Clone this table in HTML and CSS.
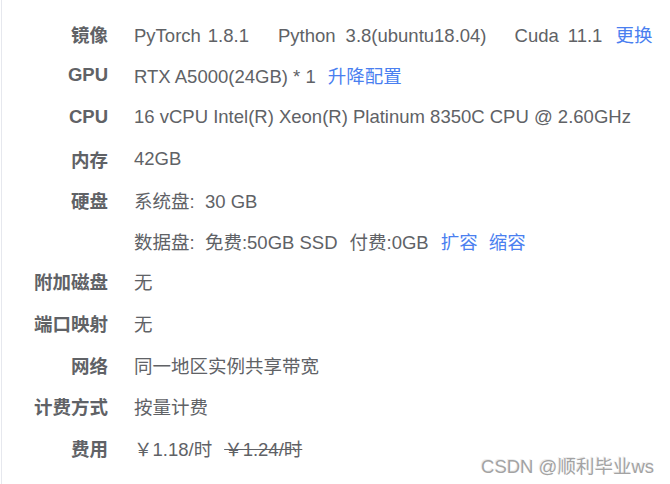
FILE: index.html
```html
<!DOCTYPE html>
<html lang="zh-CN">
<head>
<meta charset="utf-8">
<link rel="stylesheet" href="styles.css">
</head>
<body>
<div class="panel">
  <div class="spec">
    <div class="label">镜像</div>
    <div class="value"><span class="g7">PyTorch</span><span class="g29">1.8.1</span><span class="g10">Python</span><span class="g28">3.8(ubuntu18.04)</span><span class="g9">Cuda</span><span class="g13">11.1</span><a class="link">更换</a></div>

    <div class="label">GPU</div>
    <div class="value"><span class="g12">RTX A5000(24GB) * 1</span><a class="link">升降配置</a></div>

    <div class="label">CPU</div>
    <div class="value">16 vCPU Intel(R) Xeon(R) Platinum 8350C CPU @ 2.60GHz</div>

    <div class="label">内存</div>
    <div class="value">42GB</div>

    <div class="label">硬盘</div>
    <div class="value">系统盘:&nbsp;&nbsp;30 GB</div>

    <div class="label"></div>
    <div class="value"><span class="g12">数据盘:&nbsp;&nbsp;免费:50GB SSD</span><span class="g12">付费:0GB</span><a class="link g11">扩容</a><a class="link">缩容</a></div>

    <div class="label">附加磁盘</div>
    <div class="value">无</div>

    <div class="label">端口映射</div>
    <div class="value">无</div>

    <div class="label">网络</div>
    <div class="value">同一地区实例共享带宽</div>

    <div class="label">计费方式</div>
    <div class="value">按量计费</div>

    <div class="label">费用</div>
    <div class="value"><span class="g12">￥1.18/时</span><del class="old">￥1.24/时</del></div>
  </div>
  <div class="watermark">CSDN @顺利毕业ws</div>
</div>
</body>
</html>
```

FILE: styles.css
```css
html, body {
  margin: 0;
  padding: 0;
  background: #ffffff;
}
body {
  width: 670px;
  height: 484px;
  overflow: hidden;
  font-family: "Liberation Sans", Arial, "Noto Sans CJK SC", sans-serif;
  color: #606266;
}
.panel {
  position: relative;
  margin-left: 1px;
  height: 484px;
  border-left: 1px solid #e6e8ee;
  box-sizing: border-box;
  padding-top: 13px;
}
.spec {
  display: grid;
  grid-template-columns: 106px 1fr;
  grid-template-rows: repeat(5, 41.6px) 39.6px repeat(5, 41.6px);
  column-gap: 26px;
  align-items: center;
  font-size: 18.5px;
}
.label {
  text-align: right;
  font-weight: bold;
  color: #606266;
}
.value {
  white-space: nowrap;
  color: #606266;
}
.g7 { margin-right: 7px; }
.g9 { margin-right: 9px; }
.g10 { margin-right: 10px; }
.g11 { margin-right: 11px; }
.g12 { margin-right: 12px; }
.g13 { margin-right: 13px; }
.g28 { margin-right: 28px; }
.g29 { margin-right: 29px; }
.link {
  color: #4a7ff0;
  cursor: pointer;
}
.old {
  color: #606266;
}
.watermark {
  position: absolute;
  right: 16px;
  bottom: 6px;
  font-size: 18.5px;
  color: #a3a3a3;
  text-shadow: 1px 1px 0 #ffffff, -1px -1px 0 #ececec;
}
```
